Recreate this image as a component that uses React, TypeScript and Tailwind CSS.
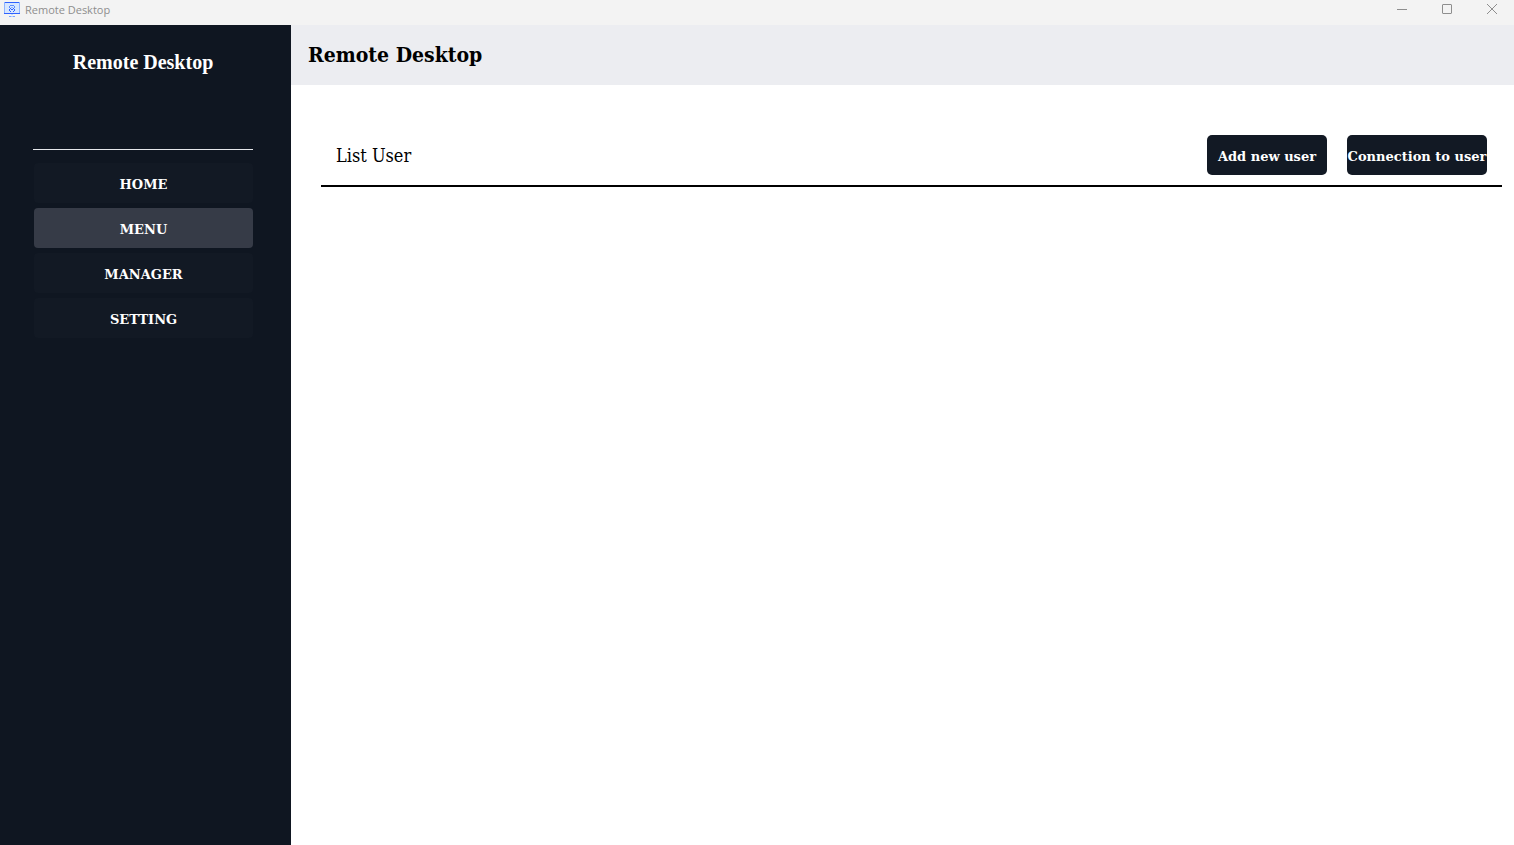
const navItems = ["HOME", "MENU", "MANAGER", "SETTING"];

function AppIcon() {
  return (
    <svg className="size-4" viewBox="0 0 16 16" fill="none" aria-hidden="true">
      <rect x="0.5" y="0.5" width="15" height="11" fill="#d6e6ff" stroke="#8fb4ff" />
      <path d="M1 0.5h14" stroke="#2f62ff" />
      <path d="M0 11.5h16" stroke="#2f62ff" />
      <path d="M6 3.5h4M5 4.5h1M10 4.5h1M5 5.5h1M10 5.5h1" stroke="#5c8cff" />
      <path d="M6 6.5h1M9 6.5h1M5 7.5h1M7 7.5h2M10 7.5h1M5 8.5h1M10 8.5h1M6 9.5h1M9 9.5h1" stroke="#2f62ff" />
      <path d="M7 5.5h2" stroke="#8fb4ff" />
      <path d="M7 12.5h2" stroke="#c4d8ff" />
      <path d="M5 14.5h2M9 14.5h2" stroke="#7aa3ff" />
      <path d="M7 14.5h2" stroke="#b5ceff" />
    </svg>
  );
}

function TitleBar() {
  return (
    <div className="flex h-[25px] shrink-0 items-start justify-between bg-[#f3f3f3] text-[#8e8e8e]">
      <div className="flex items-center gap-[5px] pt-0.5 pl-1">
        <AppIcon />
        <span className="font-['Open_Sans',sans-serif] text-[11px] leading-4">Remote Desktop</span>
      </div>
      <div className="flex">
        <button type="button" aria-label="Minimize" className="flex h-[18px] w-[45px] items-center justify-center">
          <svg width="10" height="10" viewBox="0 0 10 10" fill="none" stroke="currentColor"><path d="M0 5.5h10" /></svg>
        </button>
        <button type="button" aria-label="Maximize" className="flex h-[18px] w-[45px] items-center justify-center">
          <svg width="10" height="10" viewBox="0 0 10 10" fill="none" stroke="currentColor"><rect x="0.5" y="0.5" width="9" height="9" rx="0.5" /></svg>
        </button>
        <button type="button" aria-label="Close" className="flex h-[18px] w-[45px] items-center justify-center">
          <svg width="10" height="10" viewBox="0 0 10 10" fill="none" stroke="currentColor"><path d="M0 0l10 10M10 0L0 10" /></svg>
        </button>
      </div>
    </div>
  );
}

function Sidebar() {
  return (
    <aside className="flex w-[291px] shrink-0 flex-col bg-[#0f1621] pr-[38px] pl-[33px] text-white">
      <div className="h-[124px] pt-[25px] text-center font-['Liberation_Serif',serif] text-xl leading-6 font-bold">
        Remote Desktop
      </div>
      <hr className="border-[#e5e7eb]" />
      <nav className="mt-[13px] ml-px flex flex-col gap-[5px]">
        {navItems.map((item) => (
          <button
            key={item}
            type="button"
            className={`h-10 rounded pt-1 text-[13px] font-bold ${item === "MENU" ? "bg-[#363b47]" : "bg-[#121924]"}`}
          >
            {item}
          </button>
        ))}
      </nav>
    </aside>
  );
}

export default function App() {
  return (
    <div className="flex min-h-screen flex-col bg-white font-['DejaVu_Serif',serif] text-black">
      <TitleBar />
      <div className="flex flex-1">
        <Sidebar />
        <div className="flex min-w-0 flex-1 flex-col font-['DejaVu_Serif_Condensed','DejaVu_Serif',serif]">
          <header className="flex h-[60px] items-center bg-[#ecedf1] px-[17px]">
            <h1 className="text-[21px] leading-7 font-bold">Remote Desktop</h1>
          </header>
          <main className="pt-[50px] pr-3 pl-[30px]">
            <div className="flex items-center justify-between border-b-2 border-black px-[15px] pb-2.5">
              <h2 className="pt-0.5 text-lg leading-8">List User</h2>
              <div className="flex gap-5 font-['DejaVu_Serif',serif] text-[13px] font-bold text-white">
                <button type="button" className="h-10 w-[120px] rounded-[5px] bg-[#121924] pt-1 whitespace-nowrap">Add new user</button>
                <button type="button" className="h-10 w-[140px] rounded-[5px] bg-[#121924] pt-1 whitespace-nowrap">Connection to user</button>
              </div>
            </div>
          </main>
        </div>
      </div>
    </div>
  );
}
